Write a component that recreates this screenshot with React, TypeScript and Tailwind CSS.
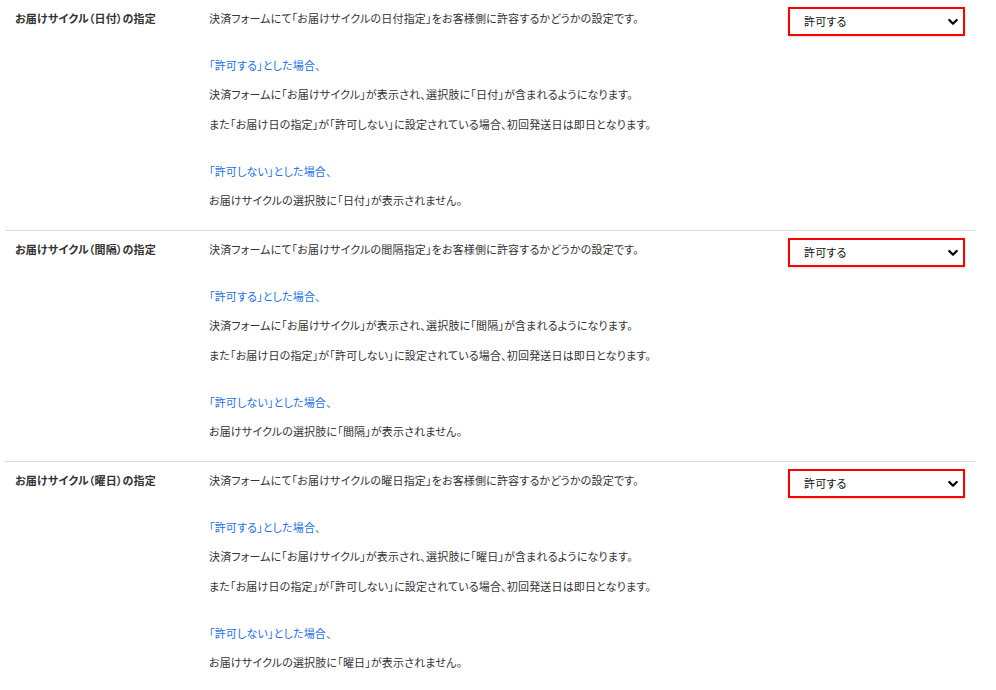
import React from "react";

const sections = [
  { key: "日付", label: "お届けサイクル（日付）の指定" },
  { key: "間隔", label: "お届けサイクル（間隔）の指定" },
  { key: "曜日", label: "お届けサイクル（曜日）の指定" },
];

function FakeSelect() {
  return (
    <div className="relative flex h-[29px] w-[177px] items-center border-[2.5px] border-[#ff0000] bg-white pl-[14px] pr-[5px] shadow-[0_1px_2px_rgba(0,0,0,0.15)]">
      <span className="flex-1 text-[11px] text-[#111]">許可する</span>
      <svg width="10" height="8" viewBox="0 0 10 8" className="mt-px">
        <path d="M1.3 2 L5 5.7 L8.7 2" fill="none" stroke="#000" strokeWidth="2.2" strokeLinecap="round" strokeLinejoin="round" />
      </svg>
    </div>
  );
}

export default function App() {
  return (
    <div
      className="w-[996px] bg-white text-[#333]"
      style={{ fontFamily: '"Noto Sans CJK JP", "Noto Sans", sans-serif', fontFeatureSettings: '"palt"' }}
    >
      <div className="ml-[5px] w-[970px]">
        {sections.map((s, i) => (
          <div
            key={s.key}
            className={`flex items-start px-[10px] pb-[21px] pt-[9px] tracking-[0.17px] ${i < sections.length - 1 ? "border-b border-[#dcdcdc]" : ""}`}
          >
            <div className="w-[194px] shrink-0 text-[11px] font-bold leading-[18px] text-[#333]">{s.label}</div>
            <div className="flex-1 text-[11px] leading-[18px] text-[#333]">
              <p className="mb-[29px]">決済フォームにて「お届けサイクルの{s.key}指定」をお客様側に許容するかどうかの設定です。</p>
              <p className="mb-[11px] text-[#1a6fe8]">「許可する」とした場合、</p>
              <p className="mb-[12px]">決済フォームに「お届けサイクル」が表示され、選択肢に「{s.key}」が含まれるようになります。</p>
              <p className="mb-[29px]">また「お届け日の指定」が「許可しない」に設定されている場合、初回発送日は即日となります。</p>
              <p className="mb-[11px] text-[#1a6fe8]">「許可しない」とした場合、</p>
              <p>お届けサイクルの選択肢に「{s.key}」が表示されません。</p>
            </div>
            <div className="-mt-[2px] shrink-0">
              <FakeSelect />
            </div>
          </div>
        ))}
      </div>
    </div>
  );
}
